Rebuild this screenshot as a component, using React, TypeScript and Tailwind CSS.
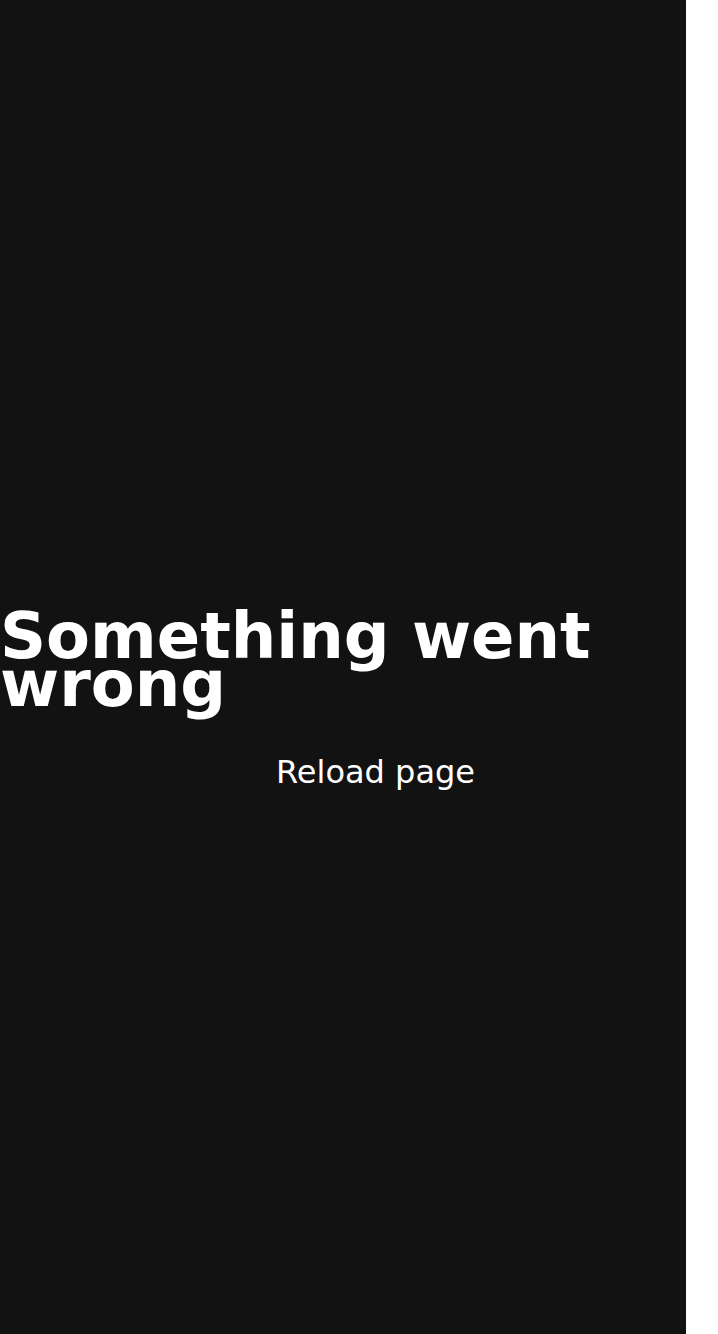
export default function App() {
  return (
    <div className="min-h-screen w-full bg-white">
      <div
        className="flex h-[1334px] w-[686px] flex-col justify-center bg-[#121212] pt-[69px] text-white"
        style={{ fontFamily: '"DejaVu Sans", sans-serif' }}
      >
        <h1 className="text-[64px] font-bold leading-[48px]">Something went wrong</h1>
        <div className="mt-[46px] flex justify-center pl-[65px]">
          <button type="button" className="text-[32px] leading-[37px] text-white">
            Reload page
          </button>
        </div>
      </div>
    </div>
  );
}
